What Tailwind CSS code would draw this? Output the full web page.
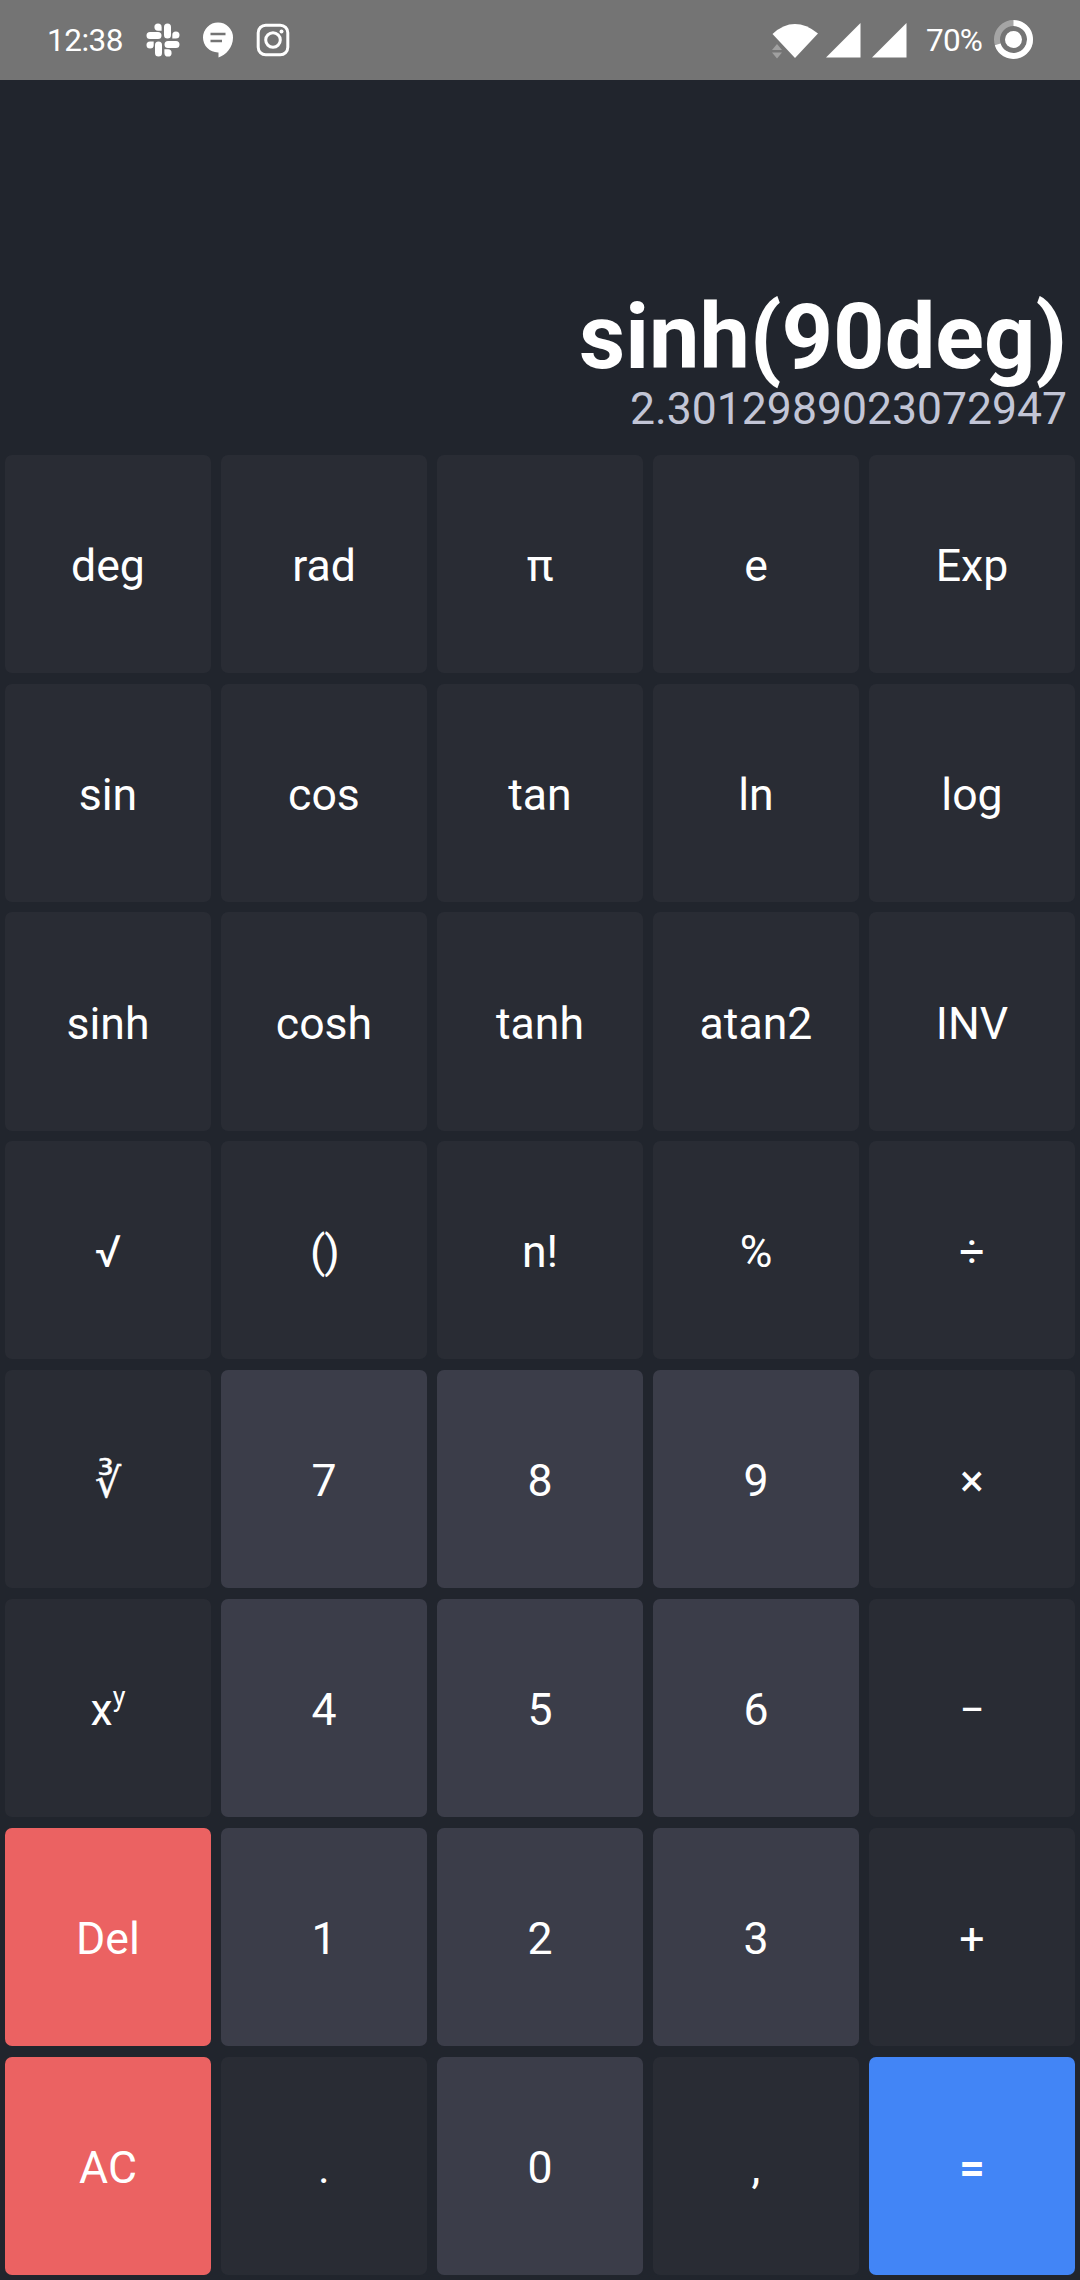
<!DOCTYPE html>
<html lang="en">
<head>
<meta charset="utf-8">
<title>Calculator</title>
<script src="https://cdn.jsdelivr.net/npm/@tailwindcss/browser@4"></script>
</head>
<body class="flex h-[2280px] w-[1080px] flex-col overflow-hidden bg-[#21252d] font-['Roboto','Noto_Sans',sans-serif] text-white">
  <header class="flex h-20 shrink-0 items-center justify-between bg-[#747474] pr-[46px] pl-[47px] text-[31.5px] leading-none">
    <div class="flex items-center">
      <span class="w-[99px] pt-0.5 tracking-[-0.5px]">12:38</span>
      <svg class="h-[34px] w-[34px]" viewBox="0 0 34 34" fill="currentColor">
        <g><path d="M18 4a3.5 3.5 0 0 1 7 0v8a3.5 3.5 0 0 1-7 0z"/><path d="M26.3 12.5V12a3.6 3.6 0 1 1 3.6 3.6h-3.6z"/></g>
        <g transform="rotate(90 17 17)"><path d="M18 4a3.5 3.5 0 0 1 7 0v8a3.5 3.5 0 0 1-7 0z"/><path d="M26.3 12.5V12a3.6 3.6 0 1 1 3.6 3.6h-3.6z"/></g>
        <g transform="rotate(180 17 17)"><path d="M18 4a3.5 3.5 0 0 1 7 0v8a3.5 3.5 0 0 1-7 0z"/><path d="M26.3 12.5V12a3.6 3.6 0 1 1 3.6 3.6h-3.6z"/></g>
        <g transform="rotate(270 17 17)"><path d="M18 4a3.5 3.5 0 0 1 7 0v8a3.5 3.5 0 0 1-7 0z"/><path d="M26.3 12.5V12a3.6 3.6 0 1 1 3.6 3.6h-3.6z"/></g>
      </svg>
      <svg class="ml-[22px] h-9 w-8" viewBox="0 0 32 36">
        <path fill="currentColor" d="M16 0.5a15 15 0 0 1 15 15.2C31 25 24 33 16.5 35.5V30.5H16a15 15 0 0 1 0-30z"/>
        <path stroke="#747474" stroke-width="2.4" d="M8.5 12h15M8.5 19h11.500"/>
      </svg>
      <svg class="ml-[22px] h-[34px] w-[34px]" viewBox="0 0 34 34" fill="none" stroke="currentColor" stroke-width="3">
        <rect x="2.200" y="2.200" width="29.600" height="29.600" rx="7.500"/>
        <circle cx="17" cy="17" r="7.300"/>
        <circle cx="25.500" cy="8.500" r="2" fill="currentColor" stroke="none"/>
      </svg>
    </div>
    <div class="flex items-center">
      <svg class="h-10 w-[140px]" viewBox="1 0 140 40" fill="currentColor">
        <path d="M2.500 14Q24 -5.500 48 13.500L25 38z"/>
        <path d="M2 30h10l-5-6zM2 32.500h10l-5 6z" fill="#a0a0a0"/>
        <path d="M90.500 3V37.500H56zM136.500 3V37.500H102z"/>
      </svg>
      <span class="ml-[15px] w-[68px] pt-0.5 tracking-[-0.8px]">70%</span>
      <svg class="h-10 w-10" viewBox="0.500 0.500 40 40" fill="none">
        <circle cx="20" cy="20" r="16.500" stroke="#a5a5a5" stroke-width="6"/>
        <path d="M20 3.500A16.500 16.500 0 1 1 4.200 24.800" stroke="currentColor" stroke-width="6"/>
        <circle cx="20" cy="20" r="8.500" fill="currentColor"/>
      </svg>
    </div>
  </header>

  <section class="flex h-[369.4px] shrink-0 flex-col items-end justify-end pr-[13px] pb-[14px]">
    <div class="text-[90px] leading-[90px] font-bold">sinh(90deg)</div>
    <div class="text-[44.5px] leading-[52px] text-[#c2c5d6]">2.3012989023072947</div>
  </section>

  <main class="grid min-h-0 flex-1 grid-cols-5 grid-rows-8 gap-[10.67px] p-[5.33px] text-[44.6px] leading-none *:flex *:items-center *:justify-center *:rounded-[7px] *:pt-[5px]">
    <button class="bg-[#292c34]">deg</button>
    <button class="bg-[#292c34]">rad</button>
    <button class="bg-[#292c34]">π</button>
    <button class="bg-[#292c34]">e</button>
    <button class="bg-[#292c34]">Exp</button>

    <button class="bg-[#292c34]">sin</button>
    <button class="bg-[#292c34]">cos</button>
    <button class="bg-[#292c34]">tan</button>
    <button class="bg-[#292c34]">ln</button>
    <button class="bg-[#292c34]">log</button>

    <button class="bg-[#292c34]">sinh</button>
    <button class="bg-[#292c34]">cosh</button>
    <button class="bg-[#292c34]">tanh</button>
    <button class="bg-[#292c34]">atan2</button>
    <button class="bg-[#292c34]">INV</button>

    <button class="bg-[#292c34]">√</button>
    <button class="bg-[#292c34]"><span class="-mr-px tracking-[-1px]">()</span></button>
    <button class="bg-[#292c34]">n!</button>
    <button class="bg-[#292c34]">%</button>
    <button class="bg-[#292c34]">÷</button>

    <button class="bg-[#292c34]"><span class="pt-1 text-[41px] [-webkit-text-stroke:0.5px_white]">∛</span></button>
    <button class="bg-[#3b3d49]">7</button>
    <button class="bg-[#3b3d49]">8</button>
    <button class="bg-[#3b3d49]">9</button>
    <button class="bg-[#292c34]">×</button>

    <button class="bg-[#292c34]"><span>x<span class="align-[19px] text-[27px] leading-[0]">y</span></span></button>
    <button class="bg-[#3b3d49]">4</button>
    <button class="bg-[#3b3d49]">5</button>
    <button class="bg-[#3b3d49]">6</button>
    <button class="bg-[#292c34]">−</button>

    <button class="bg-[#eb6262]">Del</button>
    <button class="bg-[#3b3d49]">1</button>
    <button class="bg-[#3b3d49]">2</button>
    <button class="bg-[#3b3d49]">3</button>
    <button class="bg-[#292c34]">+</button>

    <button class="bg-[#eb6262]">AC</button>
    <button class="bg-[#292c34]">.</button>
    <button class="bg-[#3b3d49]">0</button>
    <button class="bg-[#292c34]">,</button>
    <button class="bg-[#4285f6] font-bold">=</button>
  </main>
</body>
</html>
